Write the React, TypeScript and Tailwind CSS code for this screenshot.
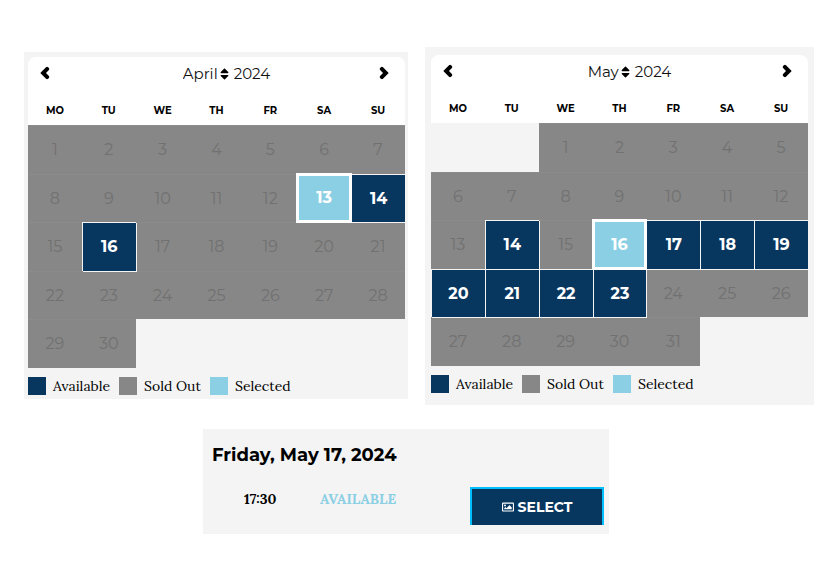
import { useState } from 'react';
import { FaRegImage, FaSort } from 'react-icons/fa';
import clsx from 'clsx';

type Month = {
    name: string;
    year: number;
    offset: number;
    days: number;
    available: number[];
    selected: number;
};

const WEEKDAYS = ['MO', 'TU', 'WE', 'TH', 'FR', 'SA', 'SU'];

const MONTH_NAMES = [
    'January', 'February', 'March', 'April', 'May', 'June',
    'July', 'August', 'September', 'October', 'November', 'December',
];

const APRIL: Month = { name: 'April', year: 2024, offset: 0, days: 30, available: [13, 14, 16], selected: 13 };
const MAY: Month = { name: 'May', year: 2024, offset: 2, days: 31, available: [14, 16, 17, 18, 19, 20, 21, 22, 23], selected: 16 };

const LEGEND = [
    { label: 'Available', color: 'bg-[#07365f]' },
    { label: 'Sold Out', color: 'bg-[#878787]' },
    { label: 'Selected', color: 'bg-[#8bcfe4]' },
];

// Split the month into weeks, null for the blank cells around it
function getWeeks({ offset, days }: Month) {
    const weeks: (number | null)[][] = [];
    for (let start = 1 - offset; start <= days; start += 7) {
        weeks.push(WEEKDAYS.map((_, i) => (start + i >= 1 && start + i <= days ? start + i : null)));
    }
    return weeks;
}

function Chevron({ className }: { className?: string }) {
    return (
        <svg viewBox="0 0 10 14" className={clsx('w-[10px] h-[14px]', className)} aria-hidden="true">
            <path
                d="M0.3 7 L6 1.2 Q7 0.3 8.1 1.2 L8.9 2 Q9.8 3 8.9 4 L6 7 L8.9 10 Q9.8 11 8.9 12 L8.1 12.8 Q7 13.7 6 12.8 Z"
                fill="#000"
            />
        </svg>
    );
}

function Calendar({ month, className }: { month: Month; className: string }) {
    const [selected, setSelected] = useState(month.selected);

    return (
        <section className={clsx('bg-[#f4f4f4]', className)}>
            <div className="bg-white rounded-t-lg pb-2">
                <div className="flex items-center justify-between h-8 pl-3 pr-4">
                    <button type="button" aria-label="Previous month">
                        <Chevron />
                    </button>
                    <div className="flex items-center pl-6 pt-0.5 text-[15px] leading-6 text-[#111]">
                        <select aria-label="Month" defaultValue={month.name} className="appearance-none [field-sizing:content] bg-transparent">
                            {MONTH_NAMES.map((name) => (
                                <option key={name}>{name}</option>
                            ))}
                        </select>
                        <FaSort className="w-[9px] h-[14px] ml-0.5 mr-[5px] text-black" />
                        <span>{month.year}</span>
                    </div>
                    <button type="button" aria-label="Next month">
                        <Chevron className="rotate-180" />
                    </button>
                </div>
            </div>

            <table className="w-full table-fixed border-separate border-spacing-0 text-center">
                <thead>
                    <tr className="h-7 bg-white">
                        {WEEKDAYS.map((day) => (
                            <th key={day} scope="col" className="p-0 text-[10px] leading-4 font-bold text-black">{day}</th>
                        ))}
                    </tr>
                </thead>
                <tbody>
                    {getWeeks(month).map((week, i) => (
                        <tr key={i} className="odd:h-[49px] even:h-12">
                            {week.map((day, j) => {
                                if (day === null) return <td key={j} className="p-0" />;
                                if (!month.available.includes(day)) {
                                    return (
                                        <td key={j} className="p-0 bg-[#878787] border-t border-[#8b8b8b] text-base leading-6 text-[#717171]">{day}</td>
                                    );
                                }
                                return (
                                    <td key={j} className="h-[inherit] p-0 bg-[#878787]">
                                        <button
                                            type="button"
                                            aria-pressed={day === selected}
                                            onClick={() => setSelected(day)}
                                            className={clsx(
                                                'relative block w-full h-full text-base leading-6 font-bold text-white',
                                                day === selected
                                                    ? 'z-10 bg-[#8bcfe4] outline-3 -outline-offset-2 outline-white'
                                                    : 'bg-[#07365f] border-t border-l border-[#f4f4f4] shadow-[1px_1px_0_#f4f4f4]'
                                            )}
                                        >
                                            {day}
                                        </button>
                                    </td>
                                );
                            })}
                        </tr>
                    ))}
                </tbody>
            </table>

            <ul className="flex pt-[9px] font-[Lora,'Liberation_Serif',serif] text-sm text-black">
                {LEGEND.map(({ label, color }) => (
                    <li key={label} className="flex gap-[7px] w-[91px] leading-[18px] whitespace-nowrap">
                        <span className={clsx('w-[18px] h-[18px]', color)} />
                        {label}
                    </li>
                ))}
            </ul>
        </section>
    );
}

export default function App() {
    return (
        <main className="min-h-screen bg-white pl-6 pr-[23px] pt-[47px] pb-8 font-[Montserrat,Inter,sans-serif]">
            <div className="grid grid-cols-[384fr_389fr] items-start gap-[17px]">
                <Calendar month={APRIL} className="mt-[5px] pl-1 pr-[3px] pt-[5px] pb-1" />
                <Calendar month={MAY} className="px-[6px] pt-2 pb-3" />
            </div>

            <section className="w-full max-w-[406px] mt-6 ml-[179px] pt-[14px] pb-[9px] pl-[9px] pr-[5px] bg-[#f4f4f4]">
                <h2 className="text-lg leading-6 font-bold text-black">Friday, May 17, 2024</h2>
                <div className="flex items-center mt-5 font-[Lora,'Liberation_Serif',serif] text-sm leading-5 font-bold">
                    <time className="w-[76px] pl-8 pb-[14px] text-black">17:30</time>
                    <span className="ml-8 pb-[14px] text-[#8bcfe4]">AVAILABLE</span>
                    <button
                        type="button"
                        className="flex items-center justify-center gap-1 w-[134px] h-[38px] ml-auto border-2 border-b-0 border-[#00bfff] bg-[#07365f] font-[Montserrat,Inter,sans-serif] text-sm font-bold text-white"
                    >
                        <FaRegImage className="w-3 h-3" />
                        SELECT
                    </button>
                </div>
            </section>
        </main>
    );
}
